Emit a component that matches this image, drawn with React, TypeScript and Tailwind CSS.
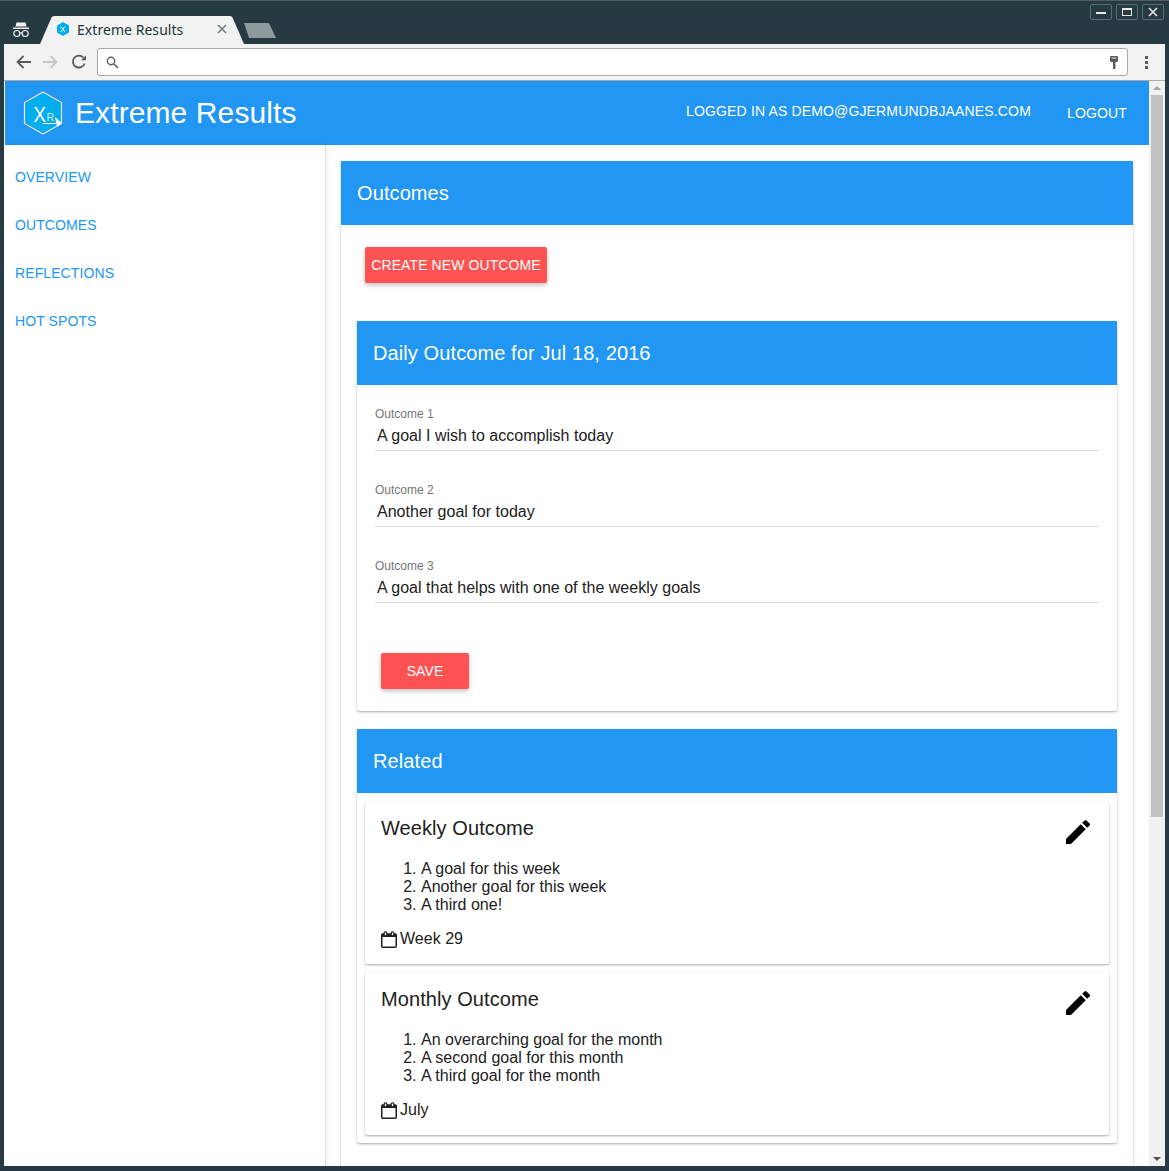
import React from "react";
import { MdEdit } from "react-icons/md";

const sans = { fontFamily: '"Liberation Sans", Arial, sans-serif' };

function Logo() {
  return (
    <svg width="40" height="44" viewBox="0 0 40 44" className="shrink-0">
      <polygon points="20,1 38.5,11.5 38.5,32.5 20,43 1.5,32.5 1.5,11.5" fill="#00aeef" stroke="#f3dfe6" strokeWidth="1.2" />
      <text x="10.5" y="31" fontSize="22" fill="#fff" fontFamily="Liberation Sans" textLength="12.5" lengthAdjust="spacingAndGlyphs">X</text>
      <text x="23.5" y="29.5" fontSize="10.5" fill="#cdeffb" fontFamily="Liberation Sans">R</text>
      <path d="M20 32.5 H33" stroke="#fff" strokeWidth="1" />
      <polygon points="32,26 39,32 34,36" fill="#fff" />
    </svg>
  );
}

function Incognito() {
  return (
    <svg width="18" height="18" viewBox="0 0 18 18">
      <path d="M4.5 1.5h9l1 4h-11z" fill="#f1f1f1" />
      <rect x="1" y="6.5" width="16" height="1.5" fill="#f1f1f1" />
      <circle cx="4.8" cy="12.5" r="3" fill="none" stroke="#f1f1f1" strokeWidth="1.2" />
      <circle cx="13.2" cy="12.5" r="3" fill="none" stroke="#f1f1f1" strokeWidth="1.2" />
      <path d="M7.8 12h2.4" stroke="#f1f1f1" strokeWidth="1.2" />
    </svg>
  );
}

function Tab() {
  return (
    <div className="relative w-[204px] h-[28px] flex items-center pl-[16px] pr-[17px] pb-[2px]">
      <svg className="absolute left-0 top-0" width="204" height="28" viewBox="0 0 204 28">
        <path d="M0 28 L11.5 1.5 Q12.2 0 14 0 H190 Q191.8 0 192.5 1.5 L204 28 Z" fill="#f2f2f2" />
      </svg>
      <svg className="relative shrink-0" width="14" height="14" viewBox="0 0 14 14">
        <polygon points="7,0 13,3.5 13,10.5 7,14 1,10.5 1,3.5" fill="#00aeef" />
        <path d="M4.5 4.5 L9 10 M9 4.5 L4.5 10" stroke="#fff" strokeWidth="1" />
      </svg>
      <span className="relative ml-[7px] text-[14px] tracking-[0.05px] text-[#263238] whitespace-nowrap" style={{ fontFamily: '"Noto Sans", sans-serif' }}>
        Extreme Results
      </span>
      <svg className="relative ml-auto" width="10" height="10" viewBox="0 0 10 10">
        <path d="M1 1 L9 9 M9 1 L1 9" stroke="#6f7f80" strokeWidth="1.6" />
      </svg>
    </div>
  );
}

function WinBtn({ children }: { children: React.ReactNode }) {
  return (
    <div className="w-[22px] h-[16px] border border-[#5b6c72] rounded-[2px] flex items-center justify-center">
      {children}
    </div>
  );
}

function TitleBar() {
  return (
    <div className="h-[44px] bg-[#263a42] border-t border-t-[#555c5f] flex items-end shrink-0 relative">
      <div className="w-[40px] h-[28px] flex items-center justify-center pl-[2px] shrink-0">
        <Incognito />
      </div>
      <Tab />
      <svg className="mb-[6px] -ml-[1px] shrink-0" width="34" height="15" viewBox="0 0 34 15">
        <path d="M1 0 H26 L33 15 H6 Z" fill="#8e9a9e" />
      </svg>
      <div className="ml-auto self-start mt-[3px] mr-[5px] flex gap-[4px]">
        <WinBtn><div className="w-[10px] h-[2px] bg-[#e8e8e8] mt-[2px]" /></WinBtn>
        <WinBtn><div className="w-[10px] h-[8px] border border-[#e8e8e8] border-t-2" /></WinBtn>
        <WinBtn>
          <svg width="10" height="10" viewBox="0 0 10 10"><path d="M1 1 L9 9 M9 1 L1 9" stroke="#e8e8e8" strokeWidth="1.6" /></svg>
        </WinBtn>
      </div>
    </div>
  );
}

function Toolbar() {
  return (
    <div className="h-[37px] bg-[#f2f2f2] border-b border-b-[#a8a8a8] flex items-center shrink-0 pl-[12px] pr-[17px]">
      <svg width="15" height="14" viewBox="0 0 15 14" className="shrink-0"><path d="M15 7H2M7.5 1 1.5 7l6 6" fill="none" stroke="#5a5a5a" strokeWidth="1.8" /></svg>
      <svg width="15" height="14" viewBox="0 0 15 14" className="shrink-0 ml-[12px]"><path d="M0 7h13M7.5 1l6 6-6 6" fill="none" stroke="#c6c6c6" strokeWidth="1.8" /></svg>
      <svg width="16" height="16" viewBox="0 0 16 16" className="shrink-0 ml-[13px]"><path d="M13.6 9.5A6 6 0 1 1 12.3 3.5" fill="none" stroke="#5a5a5a" strokeWidth="1.8" /><polygon points="10,6.2 15,6.2 15,1.2" fill="#5a5a5a" /></svg>
      <div className="ml-[10px] flex-1 h-[28px] bg-white border border-[#a9a9a9] rounded-[3px] flex items-center pl-[8px] pr-[9px]">
        <svg width="13" height="13" viewBox="0 0 13 13"><circle cx="5" cy="5" r="3.7" fill="none" stroke="#5a5a5a" strokeWidth="1.4" /><path d="M8 8l4 4" stroke="#5a5a5a" strokeWidth="1.6" /></svg>
        <svg width="8" height="13" viewBox="0 0 8 13" className="ml-auto"><rect x="0" y="0" width="8" height="6" rx="1" fill="#5a5a5a" /><rect x="3" y="5" width="2.4" height="8" fill="#5a5a5a" /><rect x="1.5" y="1.5" width="5" height="1" fill="#ddd" /></svg>
      </div>
      <div className="ml-[17px] flex flex-col gap-[2px]">
        <div className="w-[3px] h-[3px] bg-[#5a5a5a]" />
        <div className="w-[3px] h-[3px] bg-[#5a5a5a]" />
        <div className="w-[3px] h-[3px] bg-[#5a5a5a]" />
      </div>
    </div>
  );
}

function CardHeader({ title }: { title: string }) {
  return (
    <div className="h-[64px] bg-[#2196f3] text-white text-[20px] tracking-[0.1px] flex items-center px-[16px] shrink-0">
      {title}
    </div>
  );
}

function Field({ label, value }: { label: string; value: string }) {
  return (
    <div className="h-[76px] flex flex-col">
      <div className="text-[12px] leading-[14px] text-[#757575]">{label}</div>
      <div className="text-[16px] tracking-[0.015px] leading-[20px] text-[#212121] pl-[2px] mt-[5px] pb-[4px] border-b border-b-[#dcdcdc]">{value}</div>
    </div>
  );
}

function RedButton({ children, className }: { children: React.ReactNode; className: string }) {
  return (
    <div className={"h-[36px] bg-[#ff5252] text-white text-[14px] tracking-[0.1px] rounded-[2px] flex items-center justify-center shadow-[0_2px_5px_rgba(0,0,0,0.26)] " + className}>
      {children}
    </div>
  );
}

function Calendar() {
  return (
    <svg width="16" height="17" viewBox="0 0 16 17" className="shrink-0">
      <rect x="0.75" y="3" width="14.5" height="13.25" rx="1" fill="none" stroke="#212121" strokeWidth="1.5" />
      <rect x="1" y="3" width="14" height="3" fill="#212121" />
      <rect x="3.2" y="0.8" width="2.6" height="4" rx="1" fill="#fff" stroke="#212121" strokeWidth="1.2" />
      <rect x="10.2" y="0.8" width="2.6" height="4" rx="1" fill="#fff" stroke="#212121" strokeWidth="1.2" />
    </svg>
  );
}

const cardShadow = "shadow-[0_1px_3px_rgba(0,0,0,0.12),0_1px_2px_rgba(0,0,0,0.24)]";

function Related({ title, items, date }: { title: string; items: string[]; date: string }) {
  return (
    <div className={"h-[163px] bg-white rounded-[2px] px-[16px] flex flex-col text-[#212121] " + cardShadow}>
      <div className="flex justify-between pt-[15px]">
        <div className="text-[20px] tracking-[0.08px] leading-[24px]">{title}</div>
        <MdEdit className="text-black mr-[-1px]" size={32} />
      </div>
      <ol className="list-decimal pl-[40px] text-[16px] tracking-[0.015px] leading-[18px] mt-[12px]">
        {items.map((t) => (
          <li key={t}>{t}</li>
        ))}
      </ol>
      <div className="flex items-center text-[16px] tracking-[0.015px] leading-[20px] mt-[15px]">
        <Calendar />
        <span className="ml-[3px]">{date}</span>
      </div>
    </div>
  );
}

export default function App() {
  return (
    <div className="w-[1169px] h-[1171px] overflow-hidden flex flex-col bg-[#263a42] pb-[5px]" style={sans}>
      <TitleBar />
      <div className="flex-1 min-h-0 flex flex-col mx-[4px] bg-white">
        <Toolbar />
        <div className="flex-1 min-h-0 flex">
          <div className="flex-1 min-w-0 flex flex-col ml-[1px]">
            <header className="h-[64px] bg-[#2196f3] text-white flex items-center shrink-0 pl-[18px]">
              <Logo />
              <div className="ml-[12px] text-[30px] tracking-[0.1px] -mt-[2px]">Extreme Results</div>
              <div className="ml-auto text-[14px] tracking-[0.15px] -mt-[4px]">LOGGED IN AS DEMO@GJERMUNDBJAANES.COM</div>
              <div className="ml-[36px] mr-[22px] text-[14px] tracking-[0.15px]">LOGOUT</div>
            </header>
            <div className="flex-1 min-h-0 flex">
              <nav className="w-[321px] shrink-0 border-r border-r-[#e0e0e0] shadow-[1px_0_3px_rgba(0,0,0,0.08)] pl-[10px] pt-[8px] text-[14px] tracking-[0.1px] text-[#2196f3]">
                <div className="h-[48px] flex items-center">OVERVIEW</div>
                <div className="h-[48px] flex items-center">OUTCOMES</div>
                <div className="h-[48px] flex items-center">REFLECTIONS</div>
                <div className="h-[48px] flex items-center">HOT SPOTS</div>
              </nav>
              <main className="flex-1 min-w-0 overflow-hidden pt-[16px] pl-[15px] pr-[16px]">
                <div className={"bg-white rounded-[2px] h-[1100px] " + cardShadow}>
                  <CardHeader title="Outcomes" />
                  <div className="px-[16px]">
                    <RedButton className="w-[182px] ml-[8px] mt-[22px]">CREATE NEW OUTCOME</RedButton>
                    <div className={"mt-[38px] h-[390px] bg-white rounded-[2px] flex flex-col " + cardShadow}>
                      <CardHeader title="Daily Outcome for Jul 18, 2016" />
                      <div className="pt-[22px] px-[18px]">
                        <Field label="Outcome 1" value="A goal I wish to accomplish today" />
                        <Field label="Outcome 2" value="Another goal for today" />
                        <Field label="Outcome 3" value="A goal that helps with one of the weekly goals" />
                      </div>
                      <RedButton className="w-[88px] ml-[24px] mt-[18px]">SAVE</RedButton>
                    </div>
                    <div className={"mt-[18px] h-[414px] bg-white rounded-[2px] " + cardShadow}>
                      <CardHeader title="Related" />
                      <div className="px-[8px] pt-[8px] flex flex-col gap-[8px]">
                        <Related title="Weekly Outcome" items={["A goal for this week", "Another goal for this week", "A third one!"]} date="Week 29" />
                        <Related title="Monthly Outcome" items={["An overarching goal for the month", "A second goal for this month", "A third goal for the month"]} date="July" />
                      </div>
                    </div>
                  </div>
                </div>
              </main>
            </div>
          </div>
          <div className="w-[16px] shrink-0 bg-[#f1f1f1] flex flex-col items-center">
            <div className="h-[14px] flex items-center"><div className="w-0 h-0 border-x-[4px] border-x-transparent border-b-[4px] border-b-[#a3a3a3]" /></div>
            <div className="w-[12px] h-[722px] bg-[#c1c1c1]" />
            <div className="mt-auto h-[14px] flex items-center"><div className="w-0 h-0 border-x-[4px] border-x-transparent border-t-[4px] border-t-[#505050]" /></div>
          </div>
        </div>
      </div>
    </div>
  );
}
